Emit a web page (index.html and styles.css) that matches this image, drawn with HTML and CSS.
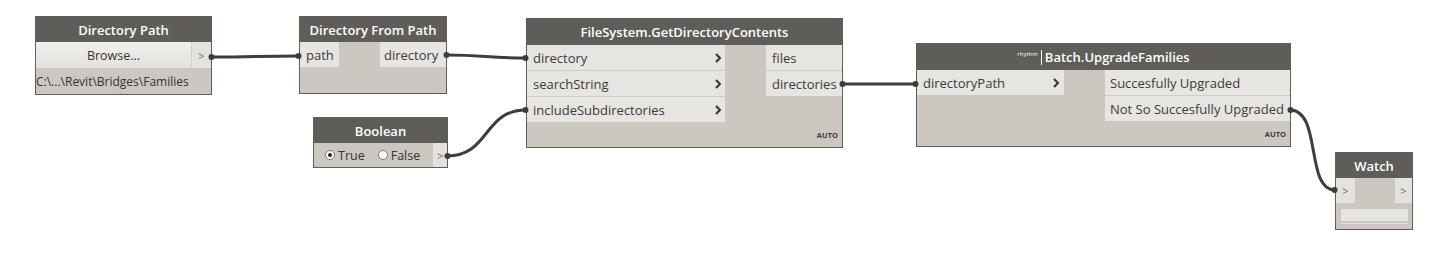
FILE: index.html
```html
<!DOCTYPE html>
<html>
<head>
<meta charset="utf-8">
<link rel="stylesheet" href="styles.css">
</head>
<body>
<div class="canvas">

  <div class="node n-dirpath">
    <div class="head">Directory Path</div>
    <div class="row browse-row">
      <div class="browse">Browse...</div>
      <div class="arr">&gt;</div>
    </div>
    <div class="pathval">C:\...\Revit\Bridges\Families</div>
  </div>

  <div class="node n-dirfrom">
    <div class="head">Directory From Path</div>
    <div class="ports">
      <div class="col ins"><div class="port">path</div></div>
      <div class="col outs"><div class="port right">directory</div></div>
    </div>
  </div>

  <div class="node n-bool">
    <div class="head">Boolean</div>
    <div class="row bool-row">
      <div class="radios">
        <span class="radio checked"></span><span class="rlabel">True</span>
        <span class="radio"></span><span class="rlabel">False</span>
      </div>
      <div class="arr">&gt;</div>
    </div>
  </div>

  <div class="node n-fs">
    <div class="head">FileSystem.GetDirectoryContents</div>
    <div class="ports">
      <div class="col ins">
        <div class="port sep"><span>directory</span><svg class="chev" viewBox="0 0 6 10"><polyline points="1,1 5,5 1,9"/></svg></div>
        <div class="port sep"><span>searchString</span><svg class="chev" viewBox="0 0 6 10"><polyline points="1,1 5,5 1,9"/></svg></div>
        <div class="port"><span>includeSubdirectories</span><svg class="chev" viewBox="0 0 6 10"><polyline points="1,1 5,5 1,9"/></svg></div>
      </div>
      <div class="col outs">
        <div class="port sep">files</div>
        <div class="port right">directories</div>
      </div>
    </div>
    <div class="foot"><span class="auto">AUTO</span></div>
  </div>

  <div class="node n-batch">
    <div class="head"><span class="pkg">rhythm</span><span class="bar"></span>Batch.UpgradeFamilies</div>
    <div class="ports">
      <div class="col ins">
        <div class="port"><span>directoryPath</span><svg class="chev" viewBox="0 0 6 10"><polyline points="1,1 5,5 1,9"/></svg></div>
      </div>
      <div class="col outs">
        <div class="port sep">Succesfully Upgraded</div>
        <div class="port">Not So Succesfully Upgraded</div>
      </div>
    </div>
    <div class="foot"><span class="auto">AUTO</span></div>
  </div>

  <div class="node n-watch">
    <div class="head">Watch</div>
    <div class="row watch-row">
      <div class="arr in-arr">&gt;</div>
      <div class="arr out-arr">&gt;</div>
    </div>
    <div class="display"></div>
  </div>

  <svg class="wires" width="1450" height="272" viewBox="0 0 1450 272">
    <g fill="none" stroke="#3d3d3d" stroke-width="3" stroke-linecap="round">
      <path d="M211,57 C255,57 255,56 299,56"/>
      <path d="M446,55 C486,55 486,58 526,58"/>
      <path d="M447,156 C490,156 483,110 526,110"/>
      <path d="M842,84 C879,84 879,84 916,84"/>
      <path d="M1290,110 C1322,110 1305,190 1335,190"/>
    </g>
    <g fill="#3d3d3d">
      <circle cx="211.5" cy="57" r="3"/>
      <circle cx="298.5" cy="56" r="3"/>
      <circle cx="446.5" cy="55" r="3"/>
      <circle cx="525.5" cy="58" r="3"/>
      <circle cx="447.5" cy="156" r="3"/>
      <circle cx="525.5" cy="110" r="3"/>
      <circle cx="842.5" cy="84" r="3"/>
      <circle cx="915.5" cy="84" r="3"/>
      <circle cx="1290.5" cy="110" r="3"/>
      <circle cx="1334.5" cy="190" r="3"/>
    </g>
  </svg>
</div>
</body>
</html>
```

FILE: styles.css
```css
html, body {
  margin: 0;
  padding: 0;
  background: #ffffff;
}

.canvas {
  position: relative;
  width: 1450px;
  height: 272px;
  overflow: hidden;
  font-family: "Open Sans", "Noto Sans", sans-serif;
  color: #3a3a3a;
}

.wires {
  position: absolute;
  left: 0;
  top: 0;
  pointer-events: none;
}

.node {
  position: absolute;
  box-sizing: border-box;
  border: 1px solid #5e5d59;
  background: #ccc8c1;
  display: flex;
  flex-direction: column;
}

.head {
  height: 25px;
  flex: none;
  background: #5e5d59;
  color: #ffffff;
  font-weight: 600;
  font-size: 13px;
  display: flex;
  align-items: center;
  justify-content: center;
  white-space: nowrap;
}

.row {
  display: flex;
  flex: none;
}

.arr {
  width: 19px;
  display: flex;
  align-items: center;
  justify-content: center;
  background: #e3e2de;
  color: #6a6a6a;
  font-size: 11px;
}

/* Directory Path */
.n-dirpath { left: 35px; top: 16px; width: 177px; height: 79px; }
.browse-row { height: 26px; }
.browse {
  flex: 1;
  display: flex;
  align-items: center;
  justify-content: center;
  background: linear-gradient(#f1f0ed, #e2e1dd);
  font-size: 12.5px;
  color: #333;
  border-right: 1px solid #d2d0cb;
}
.pathval {
  flex: 1;
  display: flex;
  align-items: center;
  font-size: 12px;
  color: #333;
  white-space: nowrap;
}

/* ports */
.ports {
  display: flex;
  justify-content: space-between;
  flex: none;
}
.col {
  display: flex;
  flex-direction: column;
}
.port {
  height: 25px;
  box-sizing: border-box;
  background: #e6e5e1;
  display: flex;
  align-items: center;
  justify-content: space-between;
  padding: 0 6px;
  font-size: 13px;
  color: #3a3a3a;
  white-space: nowrap;
}
.port.sep {
  height: 26px;
  border-bottom: 1px solid #cfccc6;
}
.chev {
  width: 6px;
  height: 10px;
  fill: none;
  stroke: #3a3a3a;
  stroke-width: 2.2;
}

.foot {
  flex: 1;
  display: flex;
  align-items: center;
  justify-content: flex-end;
  padding-right: 4px;
}
.auto {
  font-size: 7.5px;
  font-weight: 700;
  color: #3c3c3c;
}

/* Directory From Path */
.n-dirfrom { left: 299px; top: 16px; width: 148px; height: 78px; }
.n-dirfrom .ins { width: 39px; }
.n-dirfrom .ins .port { padding-left: 6px; }
.n-dirfrom .outs { width: 66px; }
.n-dirfrom .outs .port { padding: 0 4px; }

/* Boolean */
.n-bool { left: 313px; top: 117px; width: 135px; height: 51px; }
.bool-row { height: 24px; }
.radios {
  flex: 1;
  display: flex;
  align-items: center;
  padding-left: 11px;
  font-size: 12.5px;
  color: #333;
}
.radio {
  width: 10px;
  height: 10px;
  box-sizing: border-box;
  border-radius: 50%;
  border: 1px solid #777;
  background: #fff;
  margin-right: 3px;
  position: relative;
}
.radio.checked::after {
  content: "";
  position: absolute;
  left: 2px;
  top: 2px;
  width: 4px;
  height: 4px;
  border-radius: 50%;
  background: #222;
}
.rlabel { margin-right: 13px; }
.n-bool .arr { width: 18px; }

/* FileSystem */
.n-fs { left: 526px; top: 18px; width: 317px; height: 130px; }
.n-fs .head { height: 26px; }
.n-fs .ins { width: 198px; }
.n-fs .outs { width: 76px; }
.n-fs .ins .port { padding-right: 4px; }

/* Batch */
.n-batch { left: 916px; top: 43px; width: 375px; height: 104px; }
.n-batch .head { height: 26px; }
.n-batch .ins { width: 147px; }
.n-batch .ins .port { padding-right: 5px; }
.n-batch .outs { width: 185px; }
.n-batch .outs .port { padding: 0 5px; }
.pkg {
  font-size: 6px;
  font-weight: 400;
  align-self: flex-start;
  margin-top: 6px;
}
.bar {
  width: 1px;
  height: 15px;
  background: #ffffff;
  margin: 0 3px 0 3px;
}

/* Watch */
.n-watch { left: 1335px; top: 152px; width: 78px; height: 78px; }
.watch-row { height: 25px; justify-content: space-between; }
.n-watch .in-arr { width: 19px; }
.n-watch .out-arr { width: 17px; }
.display {
  margin: 6px 4px 0 5px;
  height: 12px;
  background: #e6e5e1;
  border-bottom: 2px solid #ccc8c1;
  box-shadow: 0 1px 0 #e0dfdb;
}
```
